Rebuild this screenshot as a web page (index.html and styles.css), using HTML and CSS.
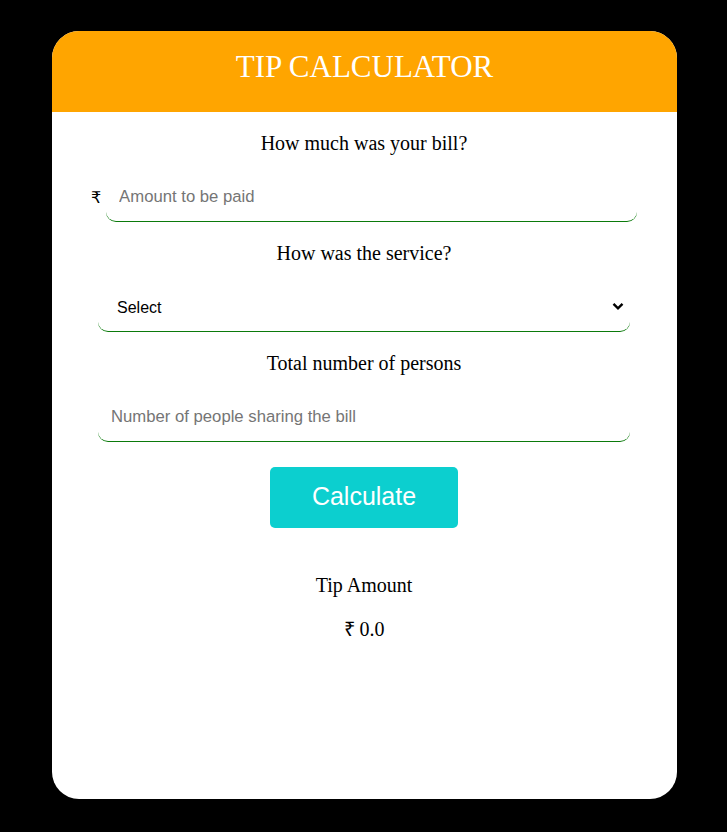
FILE: index.html
```html
<!DOCTYPE html>
<html>
<head>
<meta charset="utf-8">
<link rel="stylesheet" href="styles.css">
</head>
<body>
<div class="card">
  <div class="header"><h1 class="title">TIP CALCULATOR</h1></div>
  <div class="content">
    <p class="label first">How much was your bill?</p>
    <div class="bill-row">
      <span class="rupee">₹</span>
      <input class="field bill" type="text" placeholder="Amount to be paid">
    </div>
    <p class="label">How was the service?</p>
    <div class="select-wrap">
      <select class="field select">
        <option>Select</option>
      </select>
      <svg class="chevron" width="12" height="9" viewBox="0 0 12 9"><path d="M1.5 1.8 L6 6.3 L10.5 1.8" fill="none" stroke="#000" stroke-width="2.4"/></svg>
    </div>
    <p class="label">Total number of persons</p>
    <input class="field" type="text" placeholder="Number of people sharing the bill">
    <button class="calc">Calculate</button>
    <p class="label result-title">Tip Amount</p>
    <p class="label result">₹ 0.0</p>
  </div>
</div>
</body>
</html>
```
FILE: styles.css
```css
html, body {
  margin: 0;
  padding: 0;
  background: #000;
}
body {
  font-family: "Liberation Serif", "Times New Roman", serif;
  padding-top: 31px;
}
.card {
  width: 625px;
  height: 768px;
  margin: 0 auto;
  background: #fff;
  border-radius: 27px;
  overflow: hidden;
  position: relative;
  left: 1px;
}
.header {
  height: 81px;
  background: #ffa500;
  display: flex;
  align-items: center;
  justify-content: center;
}
.title {
  margin: 0;
  color: #fff;
  font-weight: normal;
  font-size: 31px;
  line-height: 1;
  padding-bottom: 10px;
}
.content {
  display: flex;
  flex-direction: column;
  align-items: center;
  padding-right: 1px;
}
.label {
  margin: 20px 0 27px;
  font-size: 20px;
  line-height: 22px;
  color: #000;
}
.label.first {
  margin-top: 20px;
}
.bill-row {
  display: flex;
  align-items: center;
  gap: 5px;
}
.rupee {
  font-family: "DejaVu Sans", sans-serif;
  font-size: 16px;
  padding-bottom: 8px;
}
.field {
  box-sizing: border-box;
  width: 532px;
  height: 41px;
  border: none;
  border-bottom: 1px solid #0b7a0b;
  border-radius: 10px;
  padding: 0 13px 8px;
  font-family: "Liberation Sans", Arial, sans-serif;
  font-size: 16.7px;
  background: #fff;
  outline: none;
}
.field.bill {
  width: 531px;
}
.field::placeholder {
  color: #757575;
}
.select-wrap {
  position: relative;
}
.select {
  -webkit-appearance: none;
  appearance: none;
  padding: 0 19px 8px;
  color: #000;
  font-size: 16px;
}
.chevron {
  position: absolute;
  left: 514px;
  top: 11px;
  pointer-events: none;
}
.calc {
  margin-top: 25px;
  width: 188px;
  height: 61px;
  border: none;
  border-radius: 5px;
  background: #0ccfcf;
  color: #fff;
  font-family: "Liberation Sans", Arial, sans-serif;
  font-size: 25px;
  padding: 0 0 3px;
}
.result-title {
  margin: 46px 0 0;
}
.result {
  margin: 22px 0 0;
}
```
